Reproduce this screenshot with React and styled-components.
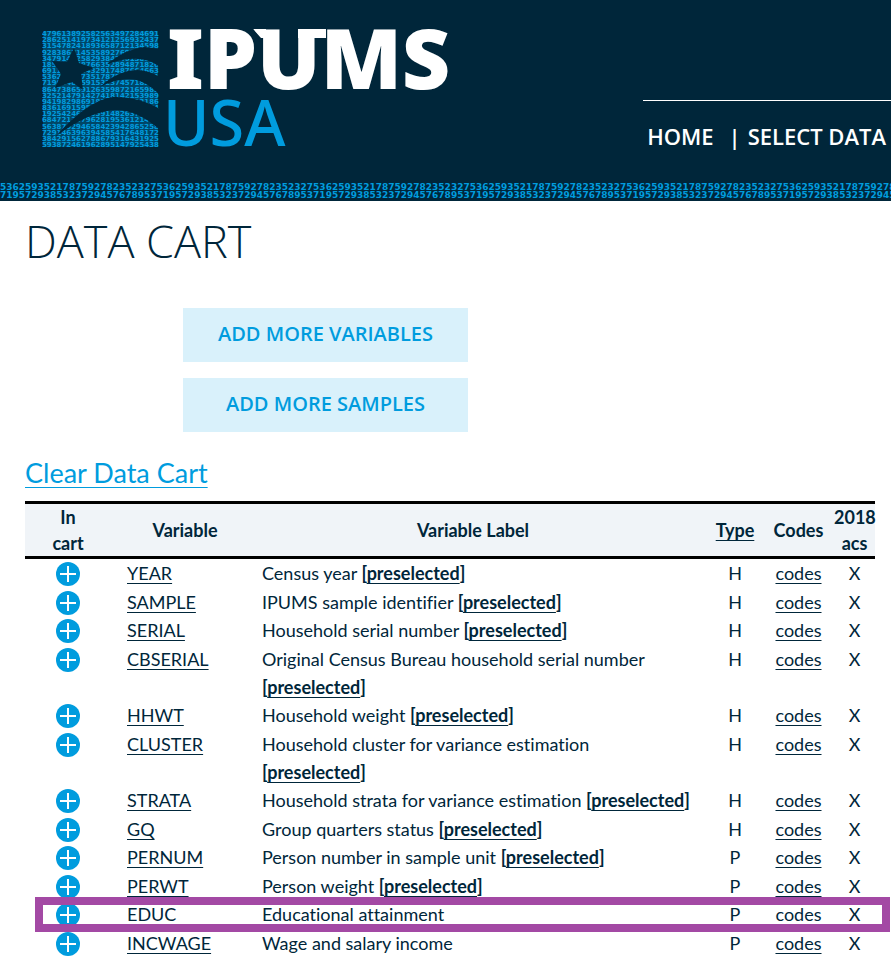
import React from 'react';
import styled, { createGlobalStyle, css } from 'styled-components';

const navy = '#00263a';
const blue = '#009cde';

const GlobalStyle = createGlobalStyle`
  * { box-sizing: border-box; }
  body {
    margin: 0;
    background: #fff;
    color: ${navy};
    font-family: Lato, "Open Sans", sans-serif;
    font-size: 18px;
    line-height: 28px;
    font-variant-ligatures: none;
  }
`;

const Header = styled.header`
  background: ${navy};
  overflow: hidden;
`;

const HeaderRow = styled.div`
  display: flex;
  justify-content: space-between;
  align-items: flex-start;
  padding: 28px 0 29px 42px;
`;

const LogoLink = styled.a`
  display: block;
  flex: none;
`;

const LogoSvg = styled.svg`
  display: block;
`;

const DigitText = styled.text`
  font: 700 7px "DejaVu Sans", sans-serif;
  fill: ${blue};
`;

const BrandText = styled.text`
  font: 900 84px "Noto Sans", sans-serif;
  fill: #fff;
`;

const ProjectText = styled.text`
  font: 500 63px "Noto Sans", sans-serif;
  fill: ${blue};
`;

const Nav = styled.nav`
  display: flex;
  margin-top: 72px;
  padding: 19px 5px 0 4px;
  border-top: 1px solid #fff;
  font: 600 22px/32px "Open Sans", sans-serif;
  white-space: nowrap;
`;

const NavLink = styled.a`
  color: #fff;
  text-decoration: none;

  & + &::before {
    content: "|";
    margin: 0 7px 0 15px;
  }
`;

const DigitBand = styled.div`
  height: 20px;
  padding-top: 2px;
  overflow: hidden;
  color: ${blue};
  font: 700 9px/8px "DejaVu Sans", sans-serif;
  white-space: nowrap;
`;

const Main = styled.main`
  padding: 0 16px 0 25px;
`;

const Title = styled.h1`
  margin: 0;
  padding-top: 12px;
  font: 300 45px/56px "Open Sans", sans-serif;
`;

const Actions = styled.div`
  display: flex;
  flex-direction: column;
  align-items: flex-start;
  gap: 16px;
  margin: 39px 0 23px 158px;
`;

const ActionButton = styled.button`
  width: 285px;
  height: 54px;
  padding: 0 0 2px;
  border: 0;
  background: #d9f1fb;
  color: ${blue};
  font: 600 20px/28px "Open Sans", sans-serif;
  cursor: pointer;
`;

const ClearLink = styled.a`
  display: table;
  color: ${blue};
  font-size: 27px;
  line-height: 36px;
  text-decoration-thickness: 1px;
  text-underline-offset: 4px;
`;

const Table = styled.table`
  width: 100%;
  margin-top: 10px;
  border-collapse: collapse;
  table-layout: fixed;
`;

const Col = styled.col`
  width: ${(p) => p.$w};
`;

const HeadCell = styled.th`
  padding: 0 0 0 ${(p) => p.$indent || '0'};
  background: #f0f4f8;
  border: solid #000;
  border-width: 3px 0;
  line-height: 26px;
  font-weight: 700;
`;

const Row = styled.tr`
  position: relative;

  &:nth-child(odd) > td { padding-bottom: 1px; }

  ${(p) => p.$highlighted && css`
    & > td:first-child::after {
      content: "";
      position: absolute;
      inset: -3px -15px -3px 10px;
      border: 8px solid #a349a4;
      pointer-events: none;
      z-index: 1;
    }
  `}
`;

const Cell = styled.td`
  padding: 0 0 0 ${(p) => p.$indent || '0'};
  text-align: ${(p) => p.$align || 'left'};
  vertical-align: top;
`;

const TextLink = styled.a`
  color: inherit;
  text-decoration-thickness: 1px;
  text-underline-offset: 3px;
`;

const CartButton = styled.button`
  display: block;
  width: 24px;
  height: 24px;
  margin: 3px auto 0;
  padding: 0;
  border: 0;
  background: none;
  cursor: pointer;
`;

const PlusSvg = styled.svg`
  display: block;
`;

const logoDigits = [
  '479613892582563497284691',
  '286251419734121256932437',
  '315478241893658712134598',
  '928386714535892769837214',
  '347914625829384246158973',
  '185297638766352894871826',
  '691158729432917487664663',
  '536281947351787592932481',
  '719634825915323745718269',
  '864738659126359872165983',
  '325214791427418142153989',
  '941982986918183625713186',
  '836169159564837491825964',
  '192542468735914826374195',
  '684721337962819536121467',
  '563876294658423942865258',
  '729146396394585417648172',
  '384291562788679316431925',
  '593872461962895147925438',
];

const Logo = () => (
  <LogoSvg width="440" height="124" viewBox="0 0 440 124" role="img" aria-label="IPUMS USA">
    <rect x="1" y="3" width="115" height="116" fill={blue} opacity="0.28" />
    {logoDigits.map((digits, i) => (
      <DigitText key={digits} x="0" y={8 + Math.round((i * 37) / 6)}>{digits}</DigitText>
    ))}
    <g fill={navy} transform="translate(1 2)">
      <path d="M31 18L36 33L51 38L38 44L40 60L29 52L12 58L18 44L9 31L24 32Z" />
      <path d="M65 33Q85 18 102 17L117 19V37Q98 22 65 34Z" />
      <path d="M57 57Q75 40 95 40Q107 41 117 47V65Q100 48 84 49Q70 50 57 57Z" />
      <path d="M12 107Q45 70 70 67Q95 66 117 79V100Q95 80 72 80Q45 82 12 107Z" />
    </g>
    <BrandText x="125" y="61">IPUMS</BrandText>
    <path d="M211 1H224V10H219Z" fill="#fff" />
    <path d="M256 1H284V10H256Z" fill="#fff" />
    <path d="M209 0L219 13" stroke={navy} strokeWidth="2" />
    <ProjectText x="121" y="118">USA</ProjectText>
  </LogoSvg>
);

const PlusIcon = () => (
  <PlusSvg width="24" height="24" viewBox="0 0 24 24" aria-hidden="true">
    <circle cx="12" cy="12" r="12" fill={blue} />
    <path d="M12 4V20M4 12H20" stroke="#fff" strokeWidth="2" />
  </PlusSvg>
);

const bandTop = '5362593521787592782352327'.repeat(24);
const bandBottom = '7195729385323729457678953'.repeat(24);

const variables = [
  { name: 'YEAR', label: 'Census year', type: 'H', preselected: true },
  { name: 'SAMPLE', label: 'IPUMS sample identifier', type: 'H', preselected: true },
  { name: 'SERIAL', label: 'Household serial number', type: 'H', preselected: true },
  { name: 'CBSERIAL', label: 'Original Census Bureau household serial number', type: 'H', preselected: true },
  { name: 'HHWT', label: 'Household weight', type: 'H', preselected: true },
  { name: 'CLUSTER', label: 'Household cluster for variance estimation', type: 'H', preselected: true },
  { name: 'STRATA', label: 'Household strata for variance estimation', type: 'H', preselected: true },
  { name: 'GQ', label: 'Group quarters status', type: 'H', preselected: true },
  { name: 'PERNUM', label: 'Person number in sample unit', type: 'P', preselected: true },
  { name: 'PERWT', label: 'Person weight', type: 'P', preselected: true },
  { name: 'EDUC', label: 'Educational attainment', type: 'P', highlighted: true },
  { name: 'INCWAGE', label: 'Wage and salary income', type: 'P' },
];

const VariableRow = ({ item }) => (
  <Row $highlighted={item.highlighted}>
    <Cell>
      <CartButton type="button" aria-label={`${item.name} in cart`}><PlusIcon /></CartButton>
    </Cell>
    <Cell $indent="16px"><TextLink href="#variable">{item.name}</TextLink></Cell>
    <Cell $indent="13px">
      {item.label}
      {item.preselected && <> <b>[<TextLink href="#preselected">preselected</TextLink>]</b></>}
    </Cell>
    <Cell $align="center">{item.type}</Cell>
    <Cell $align="center"><TextLink href="#codes">codes</TextLink></Cell>
    <Cell $align="center" $indent="10px">X</Cell>
  </Row>
);

export default function App() {
  return (
    <>
      <GlobalStyle />
      <Header>
        <HeaderRow>
          <LogoLink href="#home"><Logo /></LogoLink>
          <Nav>
            <NavLink href="#home">HOME</NavLink>
            <NavLink href="#select">SELECT DATA</NavLink>
          </Nav>
        </HeaderRow>
        <DigitBand aria-hidden="true">
          <div>{bandTop}</div>
          <div>{bandBottom}</div>
        </DigitBand>
      </Header>
      <Main>
        <Title>DATA CART</Title>
        <Actions>
          <ActionButton type="button">ADD MORE VARIABLES</ActionButton>
          <ActionButton type="button">ADD MORE SAMPLES</ActionButton>
        </Actions>
        <ClearLink href="#clear">Clear Data Cart</ClearLink>
        <Table>
          <colgroup>
            <Col $w="86px" />
            <Col $w="138px" />
            <Col $w="auto" />
            <Col $w="76px" />
            <Col $w="51px" />
            <Col $w="51px" />
          </colgroup>
          <thead>
            <tr>
              <HeadCell scope="col">In<br />cart</HeadCell>
              <HeadCell scope="col" $indent="10px">Variable</HeadCell>
              <HeadCell scope="col">Variable Label</HeadCell>
              <HeadCell scope="col"><TextLink href="#type">Type</TextLink></HeadCell>
              <HeadCell scope="col">Codes</HeadCell>
              <HeadCell scope="col" $indent="10px">2018 acs</HeadCell>
            </tr>
          </thead>
          <tbody>
            {variables.map((item) => <VariableRow key={item.name} item={item} />)}
          </tbody>
        </Table>
      </Main>
    </>
  );
}
